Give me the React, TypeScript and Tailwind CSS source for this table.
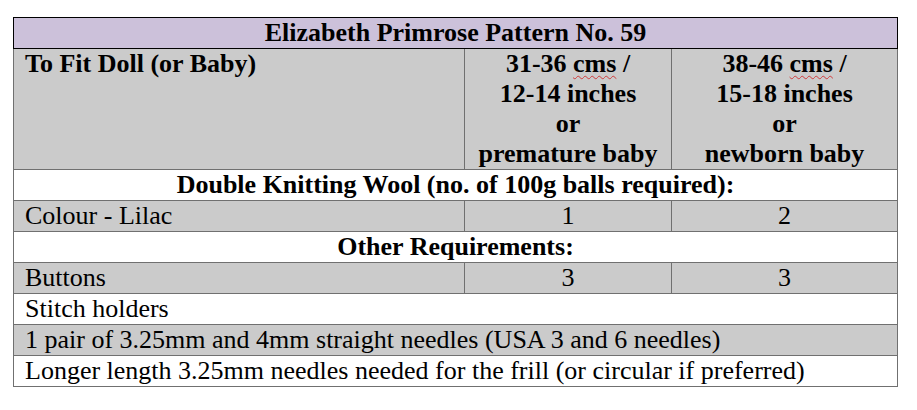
import React from "react";

const serif = { fontFamily: '"Liberation Serif", "Times New Roman", serif' };

function Squiggle({ children }: { children: React.ReactNode }) {
  return (
    <span className="underline decoration-wavy decoration-[#d03a3a] decoration-1 underline-offset-[3px]">
      {children}
    </span>
  );
}

function ThreeCol({
  gray,
  bold,
  a,
  b,
  c,
}: {
  gray?: boolean;
  bold?: boolean;
  a: React.ReactNode;
  b: React.ReactNode;
  c: React.ReactNode;
}) {
  return (
    <div
      className={`grid grid-cols-[451px_207px_226px] border-l border-b border-[#707070] ${
        gray ? "bg-[#cbcbcb]" : "bg-white"
      } ${bold ? "font-bold" : "font-normal"}`}
    >
      <div className="border-r border-[#707070] pl-[11px] h-[30px]">{a}</div>
      <div className="border-r border-[#707070] text-center h-[30px]">{b}</div>
      <div className="border-r border-[#707070] text-center h-[30px]">{c}</div>
    </div>
  );
}

function Full({
  gray,
  bold,
  center,
  children,
}: {
  gray?: boolean;
  bold?: boolean;
  center?: boolean;
  children: React.ReactNode;
}) {
  return (
    <div
      className={`h-[31px] border-l border-r border-b border-[#707070] ${
        gray ? "bg-[#cbcbcb]" : "bg-white"
      } ${bold ? "font-bold" : "font-normal"} ${center ? "text-center" : "pl-[11px]"}`}
    >
      {children}
    </div>
  );
}

export default function App() {
  return (
    <div className="w-[917px] h-[410px] bg-white pt-[17px] pl-[13px] text-black" style={serif}>
      <div className="w-[885px] text-[26px] leading-[30px]">
        <div className="h-[32px] border border-black bg-[#ccc1da] text-center font-bold">
          Elizabeth Primrose Pattern No. 59
        </div>
        <div className="grid grid-cols-[451px_207px_226px] border-l border-b border-[#707070] bg-[#cbcbcb] font-bold">
          <div className="border-r border-[#707070] pl-[11px] h-[120px]">To Fit Doll (or Baby)</div>
          <div className="border-r border-[#707070] text-center h-[120px]">
            <div>
              31-36 <Squiggle>cms</Squiggle> /
            </div>
            <div>12-14 inches</div>
            <div>or</div>
            <div>premature baby</div>
          </div>
          <div className="border-r border-[#707070] text-center h-[120px]">
            <div>
              38-46 <Squiggle>cms</Squiggle> /
            </div>
            <div>15-18 inches</div>
            <div>or</div>
            <div>newborn baby</div>
          </div>
        </div>
        <Full bold center>
          Double Knitting Wool (no. of 100g balls required):
        </Full>
        <ThreeCol gray a="Colour - Lilac" b="1" c="2" />
        <Full bold center>
          Other Requirements:
        </Full>
        <ThreeCol gray a="Buttons" b="3" c="3" />
        <Full>Stitch holders</Full>
        <Full gray>1 pair of 3.25mm and 4mm straight needles (USA 3 and 6 needles)</Full>
        <Full>Longer length 3.25mm needles needed for the frill (or circular if preferred)</Full>
      </div>
    </div>
  );
}
